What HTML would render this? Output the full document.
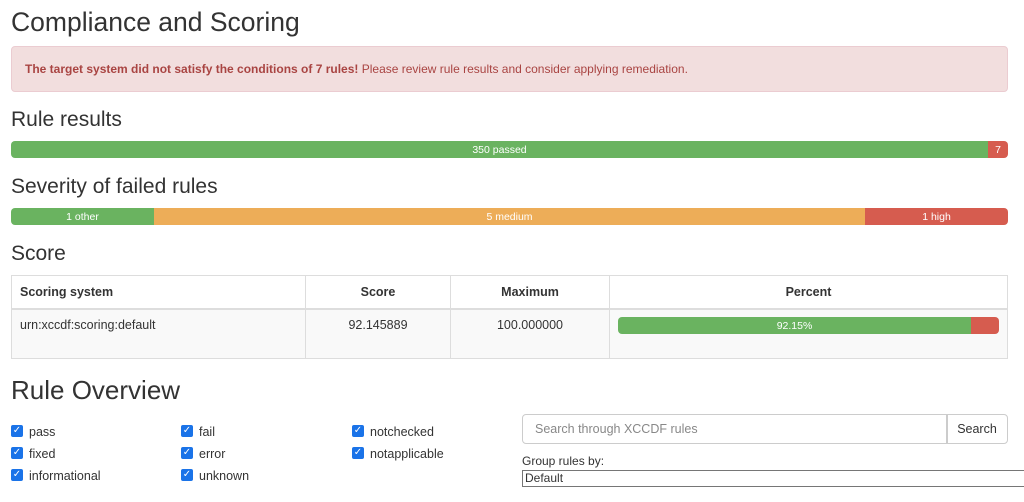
<!DOCTYPE html>
<html><head><meta charset="utf-8"><style>
*{box-sizing:border-box}
body{margin:0;width:1024px;height:502px;overflow:hidden;font-family:"Liberation Sans",sans-serif;color:#333;background:#fff;font-size:13px}
.a{position:absolute}
h{position:absolute;left:11px;font-weight:normal;color:#333;white-space:nowrap}
.bar{position:absolute;left:11px;width:997px;height:17px;border-radius:4px;overflow:hidden;display:flex;font-size:10.5px;color:#fff;line-height:18px;text-align:center}
.g{background:#6ab360}.o{background:#edad58}.r{background:#d65c4f}
table{position:absolute;left:11px;top:275px;width:997px;border-collapse:collapse;font-size:12.5px}
td,th{border:1px solid #ddd;padding:0 8px}
th{height:33px;text-align:center;border-bottom:2px solid #ddd}
td{background:#f9f9f9;height:50px;vertical-align:top;padding-top:8px;text-align:center}
.cb{position:absolute;font-size:12.5px;line-height:14px}
.cb i{position:absolute;left:0;top:0;width:12px;height:12px;background:#1a73e8;border-radius:2px;color:#fff;font-style:normal;font-size:10px;line-height:12px;text-align:center}
.cb span{margin-left:18px}
</style></head><body>
<h style="top:7px;font-size:26.5px">Compliance and Scoring</h>
<div class="a" style="left:11px;top:46px;width:997px;height:46px;background:#f2dede;border:1px solid #ebccd1;border-radius:4px;color:#a94442;font-size:12px;line-height:44px;padding-left:13px"><b>The target system did not satisfy the conditions of 7 rules!</b> Please review rule results and consider applying remediation.</div>
<h style="top:108px;font-size:21px">Rule results</h>
<div class="bar" style="top:141px"><div class="g" style="width:977px">350 passed</div><div class="r" style="flex:1">7</div></div>
<h style="top:175px;font-size:21px">Severity of failed rules</h>
<div class="bar" style="top:208px"><div class="g" style="width:143px">1 other</div><div class="o" style="width:711px">5 medium</div><div class="r" style="flex:1">1 high</div></div>
<h style="top:242px;font-size:21px">Score</h>
<table><tr><th style="width:294px;text-align:left">Scoring system</th><th style="width:145px">Score</th><th style="width:159px">Maximum</th><th>Percent</th></tr>
<tr><td style="text-align:left">urn:xccdf:scoring:default</td><td>92.145889</td><td>100.000000</td><td style="padding-top:7px"><div style="height:17px;border-radius:4px;overflow:hidden;display:flex;font-size:10.5px;color:#fff;line-height:18px"><div class="g" style="width:353px;text-align:center">92.15%</div><div class="r" style="flex:1"></div></div></td></tr></table>
<h style="top:375px;font-size:26px">Rule Overview</h>
<div class="cb" style="left:11px;top:425px"><i>✓</i><span>pass</span></div>
<div class="cb" style="left:11px;top:447px"><i>✓</i><span>fixed</span></div>
<div class="cb" style="left:11px;top:469px"><i>✓</i><span>informational</span></div>
<div class="cb" style="left:181px;top:425px"><i>✓</i><span>fail</span></div>
<div class="cb" style="left:181px;top:447px"><i>✓</i><span>error</span></div>
<div class="cb" style="left:181px;top:469px"><i>✓</i><span>unknown</span></div>
<div class="cb" style="left:352px;top:425px"><i>✓</i><span>notchecked</span></div>
<div class="cb" style="left:352px;top:447px"><i>✓</i><span>notapplicable</span></div>
<div class="a" style="left:522px;top:414px;width:426px;height:30px;border:1px solid #ccc;border-radius:4px 0 0 4px;color:#888;font-size:12.5px;line-height:28px;padding-left:12px">Search through XCCDF rules</div>
<div class="a" style="left:946px;top:414px;width:62px;height:30px;border:1px solid #ccc;border-radius:0 4px 4px 0;font-size:12.5px;line-height:28px;text-align:center">Search</div>
<div class="a" style="left:522px;top:454px;font-size:12px">Group rules by:</div>
<div class="a" style="left:522px;top:470px;width:510px;height:17px;border:1px solid #767676;font-size:12px;line-height:15px;padding-left:2px">Default</div>
</body></html>
